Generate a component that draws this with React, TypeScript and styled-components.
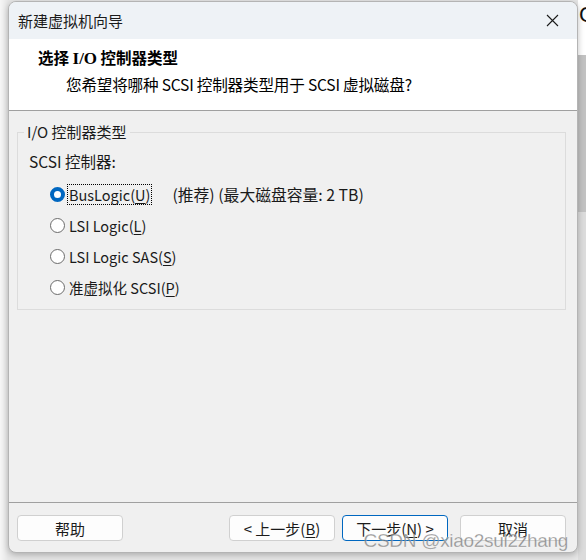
import React from "react";
import styled, { createGlobalStyle } from "styled-components";

const UI_FONT = `"Noto Sans CJK SC", "Noto Sans", sans-serif`;

const Global = createGlobalStyle`
  html, body {
    margin: 0;
    padding: 0;
    background: #f4f4f4;
  }
  body {
    font-family: ${UI_FONT};
    color: #1a1a1a;
  }
`;

const Stage = styled.div`
  width: 586px;
  height: 560px;
  display: flex;
  align-items: flex-start;
  overflow: hidden;
  background: linear-gradient(90deg, #f6f6f6 0, #e6e6e6 8px);
`;

const Window = styled.div`
  position: relative;
  margin: 1px 0 0 8px;
  width: 570px;
  height: 552px;
  box-sizing: border-box;
  border: 1px solid #b4b4b4;
  border-radius: 8px;
  overflow: hidden;
  display: flex;
  flex-direction: column;
  background: #f0f0f0;
  box-shadow: 0 2px 6px rgba(0, 0, 0, 0.25);
`;

const TitleBar = styled.div`
  height: 37px;
  flex: none;
  background: #eef2f6;
  display: flex;
  align-items: center;
  justify-content: space-between;
  padding-left: 9px;
  font-size: 15px;
  color: #1b1b1b;
`;

const CloseButton = styled.div`
  width: 46px;
  height: 37px;
  display: flex;
  align-items: center;
  justify-content: center;
  margin-right: 2px;
`;

const Header = styled.div`
  height: 72px;
  flex: none;
  background: #ffffff;
  border-bottom: 1px solid #a0a0a0;
  padding: 7px 0 0 29px;
  box-sizing: border-box;
`;

const HeaderTitle = styled.div`
  font-size: 15.5px;
  font-weight: 700;
  line-height: 22px;
  color: #000;
`;

const SerifBold = styled.span`
  font-family: "Liberation Serif", "Times New Roman", serif;
  font-weight: 700;
  font-size: 17px;
`;

const HeaderSub = styled.div`
  font-size: 15.6px;
  line-height: 22px;
  margin: 3px 0 0 28px;
  color: #000;
  letter-spacing: -0.2px;
`;

const Body = styled.div`
  flex: 1;
  padding: 11px 11px 0 8px;
`;

const Group = styled.fieldset`
  margin: 0;
  padding: 0 0 4px 11px;
  height: 188px;
  box-sizing: border-box;
  border: 1px solid #dcdcdc;
  border-radius: 0;
`;

const Legend = styled.legend`
  font-size: 15px;
  padding: 0 3px;
  margin-left: -5px;
  line-height: 20px;
`;

const FieldLabel = styled.div`
  font-size: 15.5px;
  line-height: 20px;
  margin-top: 9px;
`;

const RadioList = styled.div`
  display: flex;
  flex-direction: column;
  gap: 11.3px;
  margin: 13px 0 0 21px;
`;

const RadioRow = styled.div`
  display: flex;
  align-items: center;
  height: 20px;
  font-size: 14.5px;
`;

const RadioDot = styled.span<{ $checked?: boolean }>`
  width: 15px;
  height: 15px;
  border-radius: 50%;
  box-sizing: border-box;
  flex: none;
  border: ${(p) => (p.$checked ? "4.5px solid #0067c0" : "1px solid #6b6b6b")};
  background: #fff;
  margin-right: 3px;
`;

const RadioLabel = styled.span<{ $focused?: boolean }>`
  padding: 0 1px;
  outline: ${(p) => (p.$focused ? "1px dotted #000" : "none")};
  line-height: 19px;
`;

const Key = styled.span`
  text-decoration: underline;
  text-underline-offset: 2px;
`;

const Note = styled.span`
  margin-left: 21px;
  font-size: 15.8px;
`;

const Footer = styled.div`
  height: 50px;
  flex: none;
  border-top: 1px solid #a0a0a0;
  display: flex;
  align-items: flex-start;
  padding: 12px 11px 0 8px;
  box-sizing: border-box;
`;

const Button = styled.div<{ $primary?: boolean }>`
  width: 106px;
  height: 26px;
  box-sizing: border-box;
  border: 1px solid ${(p) => (p.$primary ? "#0067c0" : "#d0d0d0")};
  border-radius: 4px;
  background: #fdfdfd;
  display: flex;
  align-items: center;
  justify-content: center;
  font-size: 15px;
  color: #1b1b1b;
`;

const ButtonGroup = styled.div`
  margin-left: auto;
  display: flex;
  gap: 7px;

  & > :last-child {
    margin-left: 5px;
  }
`;

const Watermark = styled.div`
  position: absolute;
  right: 9px;
  bottom: 0px;
  font-family: "Liberation Sans", Arial, sans-serif;
  font-size: 19px;
  color: rgba(120, 120, 120, 0.75);
  -webkit-text-stroke: 0.3px rgba(255, 255, 255, 0.6);
  letter-spacing: -0.3px;
  pointer-events: none;
`;

const Backdrop = styled.div`
  width: 8px;
  height: 560px;
  display: flex;
  flex-direction: column;
  overflow: hidden;
  flex: none;
`;

const BackdropPiece = styled.div<{ $h: number; $bg: string }>`
  height: ${(p) => p.$h}px;
  background: ${(p) => p.$bg};
  flex: none;
  overflow: hidden;
  font-family: "Liberation Sans", Arial, sans-serif;
  font-size: 22px;
  line-height: 30px;
  color: #111;
`;

export default function App() {
  return (
    <>
      <Global />
      <Stage>
        <Window>
          <TitleBar>
            <span>新建虚拟机向导</span>
            <CloseButton>
              <svg width="13" height="13" viewBox="0 0 13 13">
                <path d="M1 1 L12 12 M12 1 L1 12" stroke="#1b1b1b" strokeWidth="1.1" />
              </svg>
            </CloseButton>
          </TitleBar>
          <Header>
            <HeaderTitle>
              选择 <SerifBold>I/O</SerifBold> 控制器类型
            </HeaderTitle>
            <HeaderSub>您希望将哪种 SCSI 控制器类型用于 SCSI 虚拟磁盘?</HeaderSub>
          </Header>
          <Body>
            <Group>
              <Legend>I/O 控制器类型</Legend>
              <FieldLabel>SCSI 控制器:</FieldLabel>
              <RadioList>
                <RadioRow>
                  <RadioDot $checked />
                  <RadioLabel $focused>
                    BusLogic(<Key>U</Key>)
                  </RadioLabel>
                  <Note>(推荐) (最大磁盘容量: 2 TB)</Note>
                </RadioRow>
                <RadioRow>
                  <RadioDot />
                  <RadioLabel>
                    LSI Logic(<Key>L</Key>)
                  </RadioLabel>
                </RadioRow>
                <RadioRow>
                  <RadioDot />
                  <RadioLabel>
                    LSI Logic SAS(<Key>S</Key>)
                  </RadioLabel>
                </RadioRow>
                <RadioRow>
                  <RadioDot />
                  <RadioLabel>
                    准虚拟化 SCSI(<Key>P</Key>)
                  </RadioLabel>
                </RadioRow>
              </RadioList>
            </Group>
          </Body>
          <Footer>
            <Button>帮助</Button>
            <ButtonGroup>
              <Button>
                &lt; 上一步(<Key>B</Key>)
              </Button>
              <Button $primary>
                下一步(<Key>N</Key>) &gt;
              </Button>
              <Button>取消</Button>
            </ButtonGroup>
          </Footer>
          <Watermark>CSDN @xiao2sui2zhang</Watermark>
        </Window>
        <Backdrop>
          <BackdropPiece $h={55} $bg="#ffffff">
            <span style={{ marginLeft: 1 }}>C</span>
          </BackdropPiece>
          <BackdropPiece $h={157} $bg="#c2c2c2" />
          <BackdropPiece $h={348} $bg="#dcdcdc" />
        </Backdrop>
      </Stage>
    </>
  );
}
